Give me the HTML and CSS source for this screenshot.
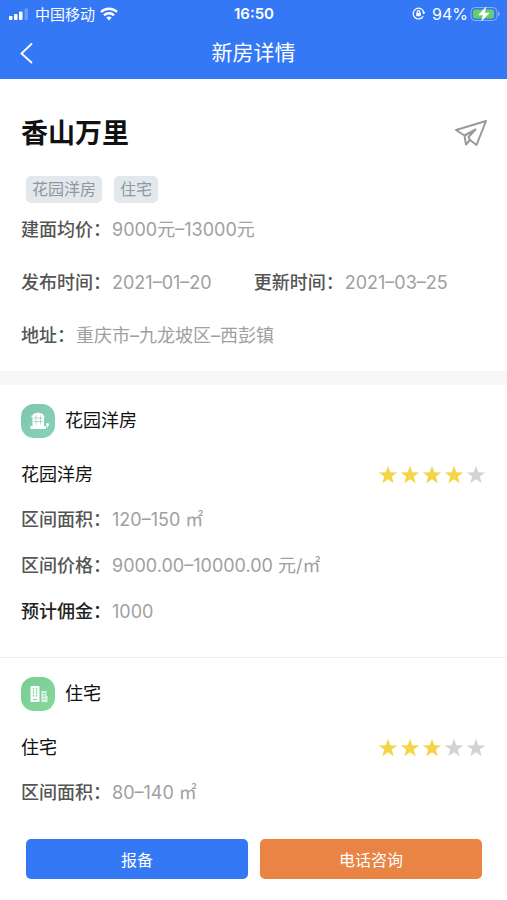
FILE: index.html
```html
<!DOCTYPE html>
<html lang="zh-CN">
<head>
    <meta charset="UTF-8">
    <meta name="viewport" content="width=device-width, initial-scale=1">
    <title>新房详情</title>
    <link rel="stylesheet" href="styles.css">
</head>
<body>

    <svg class="sprite" aria-hidden="true">
        <symbol id="star" viewBox="0 0 20 20">
            <path d="M10 .8l2.3 6.4 6.9.2-5.4 4.2 1.9 6.6L10 14.3l-5.7 3.9 1.9-6.6L.8 7.4l6.9-.2z"/>
        </symbol>
    </svg>

    <header class="header">
        <div class="status">
            <div class="status-left">
                <svg width="22" height="14" viewBox="0 0 22 14" fill="#fff">
                    <rect x="1" y="9" width="3.500" height="4" rx="1"/>
                    <rect x="6" y="7" width="3.500" height="6" rx="1"/>
                    <rect x="11" y="4.500" width="3.500" height="8.500" rx="1"/>
                    <rect x="16.500" y="1.500" width="3.500" height="11.500" rx="1" opacity=".25"/>
                </svg>
                <span>中国移动</span>
                <svg width="18" height="14" viewBox="0 0 18 14" fill="none" stroke="#fff" stroke-width="2.4">
                    <path d="M1 5a11.5 11.5 0 0 1 16 0"/>
                    <path d="M4 8.4a7 7 0 0 1 10 0"/>
                    <path d="M9 13.4L6.4 10.8a3.8 3.8 0 0 1 5.2 0z" fill="#fff" stroke="none"/>
                </svg>
            </div>
            <b class="time">16:50</b>
            <div class="status-right">
                <svg width="13" height="13" viewBox="0 0 13 13" fill="none" stroke="#fff" stroke-width="1.2">
                    <path d="M11.2 9.4A5.4 5.4 0 1 1 11.9 5.6"/>
                    <path d="M10 5h3.4l-1.6 2.6z" fill="#fff" stroke="none"/>
                    <rect x="4.2" y="5.8" width="4.6" height="3.4" rx=".6" fill="#fff" stroke="none"/>
                    <path d="M5.2 6V5a1.3 1.3 0 0 1 2.6 0v1"/>
                </svg>
                <span class="percent">94%</span>
                <svg width="30" height="16" viewBox="0 0 30 16">
                    <rect x="1" y="1.500" width="26" height="13" rx="4" fill="none" stroke="#fff" stroke-opacity=".4"/>
                    <path d="M28 5.500c2.400.8 2.400 4.200 0 5z" fill="#fff" opacity=".4"/>
                    <rect x="3" y="3.500" width="21" height="9" rx="2" fill="#67ce67"/>
                    <path d="M16 1L8.600 9h4.600L11.600 15 19.200 7h-4.700z" fill="#fff" stroke="#fff" stroke-width=".5"/>
                </svg>
            </div>
        </div>
        <div class="nav">
            <button class="back" aria-label="返回">
                <svg width="14" height="22" viewBox="0 0 14 22" fill="none" stroke="#fff" stroke-width="1.8">
                    <path d="M12 1.500L1.500 11.500l10.500 9.500"/>
                </svg>
            </button>
            <h1>新房详情</h1>
        </div>
    </header>

    <main>
        <section class="summary">
            <div class="title">
                <h2>香山万里</h2>
                <button class="share" aria-label="分享">
                    <svg width="34" height="28" viewBox="-1 1 34 28" fill="none" stroke="#999" stroke-width="2" stroke-linejoin="round">
                        <path d="M2 11L32 2l-9.500 24-6.500-5-4 4.500-1.500-9z"/>
                        <path d="M10.500 16.500L21.500 10.500l-7 7.500 1.500 3"/>
                    </svg>
                </button>
            </div>
            <div class="tags">
                <span>花园洋房</span>
                <span>住宅</span>
            </div>
            <p class="row"><b>建面均价：</b>9000元–13000元</p>
            <div class="dates">
                <p class="row"><b>发布时间：</b>2021–01–20</p>
                <p class="row"><b>更新时间：</b>2021–03–25</p>
            </div>
            <p class="row"><b>地址：</b>重庆市–九龙坡区–西彭镇</p>
        </section>

        <section class="house">
            <div class="type">
                <svg width="34" height="34" viewBox="0 0 34 34">
                    <defs>
                        <linearGradient id="teal" x1="0" y1="0" x2="1" y2="1">
                            <stop offset="0" stop-color="#7fc6ab"/>
                            <stop offset="1" stop-color="#86d3b8"/>
                        </linearGradient>
                    </defs>
                    <rect width="34" height="34" rx="13" fill="url(#teal)"/>
                    <path d="M12 10l5-1.500 5 1.500v1.500h1.500v2H23v8.500h2V25H9.500v-3H11.500v-8.500h-1v-2H12z" fill="#fff"/>
                    <path d="M15 11.500v9M19.500 11.500v9M12.500 14h9.500M12.500 17.500h9.500" stroke="#80c9ae" stroke-width=".6"/>
                    <circle cx="26.500" cy="20.500" r="1.500" fill="#fff"/>
                    <path d="M26.500 21v3" stroke="#fff" stroke-width=".8"/>
                </svg>
                <h3>花园洋房</h3>
            </div>
            <div class="name">
                <h4>花园洋房</h4>
                <div class="stars" role="img" aria-label="4 / 5">
                    <svg class="on"><use href="#star"/></svg>
                    <svg class="on"><use href="#star"/></svg>
                    <svg class="on"><use href="#star"/></svg>
                    <svg class="on"><use href="#star"/></svg>
                    <svg><use href="#star"/></svg>
                </div>
            </div>
            <p class="row"><b>区间面积：</b>120–150 ㎡</p>
            <p class="row"><b>区间价格：</b>9000.00–10000.00 元/㎡</p>
            <p class="row"><b class="dark">预计佣金：</b>1000</p>
        </section>

        <section class="house">
            <div class="type">
                <svg width="34" height="34" viewBox="0 0 34 34">
                    <defs>
                        <linearGradient id="green" x1="0" y1="0" x2="1" y2="1">
                            <stop offset="0" stop-color="#78cc92"/>
                            <stop offset="1" stop-color="#87d89d"/>
                        </linearGradient>
                    </defs>
                    <rect width="34" height="34" rx="13" fill="url(#green)"/>
                    <rect x="9.500" y="9" width="9" height="16" rx="1" fill="#fff"/>
                    <path d="M12.500 11v9M15.500 11v9" stroke="#7fd297" stroke-width="1.300" stroke-dasharray="1.500 .8"/>
                    <path d="M12 22.500h4" stroke="#7fd297"/>
                    <path d="M20.500 14h5v5h1v6h-6z" fill="#fff" opacity=".75"/>
                    <path d="M22 16.500h2.500M22 19h2.500M22 22h2.500" stroke="#7fd297"/>
                </svg>
                <h3>住宅</h3>
            </div>
            <div class="name">
                <h4>住宅</h4>
                <div class="stars" role="img" aria-label="3 / 5">
                    <svg class="on"><use href="#star"/></svg>
                    <svg class="on"><use href="#star"/></svg>
                    <svg class="on"><use href="#star"/></svg>
                    <svg><use href="#star"/></svg>
                    <svg><use href="#star"/></svg>
                </div>
            </div>
            <p class="row"><b>区间面积：</b>80–140 ㎡</p>
        </section>
    </main>

    <footer class="actions">
        <button class="report">报备</button>
        <button class="call">电话咨询</button>
    </footer>

</body>
</html>
```
FILE: styles.css
```css
* {
    box-sizing: border-box;
}

body {
    display: flex;
    flex-direction: column;
    min-height: 100vh;
    margin: 0;
    background-color: #fff;
    color: #111;
    font-family: Inter, "Noto Sans CJK SC", sans-serif;
}

h1, h2, h3, h4, p {
    margin: 0;
}

button {
    padding: 0;
    border: none;
    background: none;
    font-family: inherit;
    cursor: pointer;
}

svg {
    display: block;
}

.sprite {
    position: absolute;
    width: 0;
    height: 0;
}

.header {
    background-color: #3478f6;
    color: #fff;
}

.status {
    display: grid;
    grid-template-columns: 1fr auto 1fr;
    align-items: center;
    height: 27px;
    padding: 0 7px 0 8px;
    font-size: 15px;
}

.status-left, .status-right {
    display: flex;
    align-items: center;
    gap: 5px;
}

.status-right {
    justify-content: flex-end;
    gap: 2px;
}

.percent {
    padding-left: 5px;
    font-size: 16px;
}

.time {
    font-weight: 600;
}

.nav {
    display: grid;
    grid-template-columns: 1fr auto 1fr;
    align-items: center;
    padding: 0 20px;
}

.back {
    justify-self: start;
}

.nav h1 {
    font-size: 21px;
    line-height: 52px;
    font-weight: 400;
}

.summary {
    padding: 34px 20px 9px 21px;
    border-bottom: 14px solid #f7f7f7;
}

.title, .name {
    display: flex;
    align-items: center;
    justify-content: space-between;
}

.title h2 {
    font-size: 27px;
    line-height: 42px;
    font-weight: 700;
}

.tags {
    display: flex;
    gap: 12px;
    padding: 21px 5px 0;
}

.tags span {
    padding: 0 6px;
    border-radius: 5px;
    background-color: #e3e8ec;
    color: #8d999d;
    font-size: 16px;
    line-height: 27px;
}

.row {
    color: #a0a0a0;
    font-size: 18px;
    line-height: 46px;
    font-weight: 400;
}

.row b {
    margin-right: 1px;
    color: #555;
    font-weight: 500;
}

.row .dark {
    color: #222;
}

.summary .row {
    line-height: 53px;
}

.dates {
    display: flex;
    gap: 42px;
}

.house {
    padding: 19px 21px 22px;
}

.house + .house {
    border-top: 1px solid #eee;
}

.type {
    display: flex;
    align-items: center;
    gap: 10px;
}

.type h3, .name h4 {
    font-size: 18px;
    line-height: 34px;
    font-weight: 400;
}

.name {
    padding-top: 15px;
}

.name h4 {
    line-height: 44px;
}

.stars {
    display: flex;
    gap: 2px;
}

.stars svg {
    width: 20px;
    height: 20px;
    fill: #d3d3d3;
}

.stars .on {
    fill: #f5d547;
}

.actions {
    display: flex;
    gap: 12px;
    margin-top: auto;
    padding: 0 25px 21px 26px;
}

.actions button {
    flex: 1;
    height: 40px;
    border-radius: 5px;
    color: #fff;
    font-size: 16px;
}

.report {
    background-color: #3478f6;
}

.call {
    background-color: #ea8445;
}
```
